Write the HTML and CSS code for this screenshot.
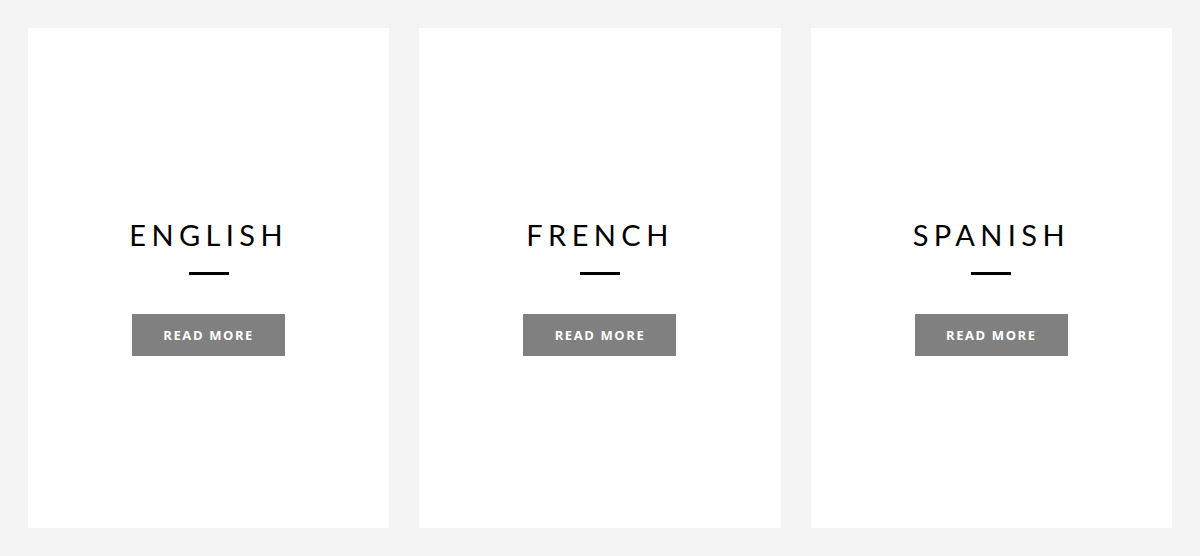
FILE: index.html
```html
<!DOCTYPE html>
<html lang="en">
<head>
    <meta charset="UTF-8">
    <title>Languages</title>
    <link rel="stylesheet" href="styles.css">
</head>
<body>
    <div class="cards">
        <div class="card">
            <h2>English</h2>
            <span class="line"></span>
            <a href="#" class="read-more">Read more</a>
        </div>
        <div class="card">
            <h2>French</h2>
            <span class="line"></span>
            <a href="#" class="read-more">Read more</a>
        </div>
        <div class="card">
            <h2>Spanish</h2>
            <span class="line"></span>
            <a href="#" class="read-more">Read more</a>
        </div>
    </div>
</body>
</html>
```

FILE: styles.css
```css
body {
    margin: 0;
    padding: 0;
    background-color: #f4f4f4;
    font-family: 'Open Sans', sans-serif;
}

.cards {
    display: flex;
    gap: 30px;
    padding: 28px;
}

.card {
    flex: 1;
    height: 500px;
    background: #fff;
    display: flex;
    flex-direction: column;
    align-items: center;
    justify-content: center;
    padding-top: 17px;
    box-sizing: border-box;
}

.card h2 {
    margin: 0;
    font-family: 'Lato', sans-serif;
    font-weight: 400;
    font-size: 29px;
    line-height: 36px;
    letter-spacing: 5.4px;
    text-transform: uppercase;
    color: #000;
}

.line {
    display: block;
    width: 40px;
    height: 3px;
    background: #000;
    margin-top: 19px;
}

.read-more {
    display: block;
    margin-top: 39px;
    width: 153px;
    height: 42px;
    line-height: 42px;
    text-align: center;
    background-color: #808080;
    color: #fff;
    text-decoration: none;
    text-transform: uppercase;
    font-size: 13px;
    font-weight: 700;
    letter-spacing: 1.6px;
}
```
